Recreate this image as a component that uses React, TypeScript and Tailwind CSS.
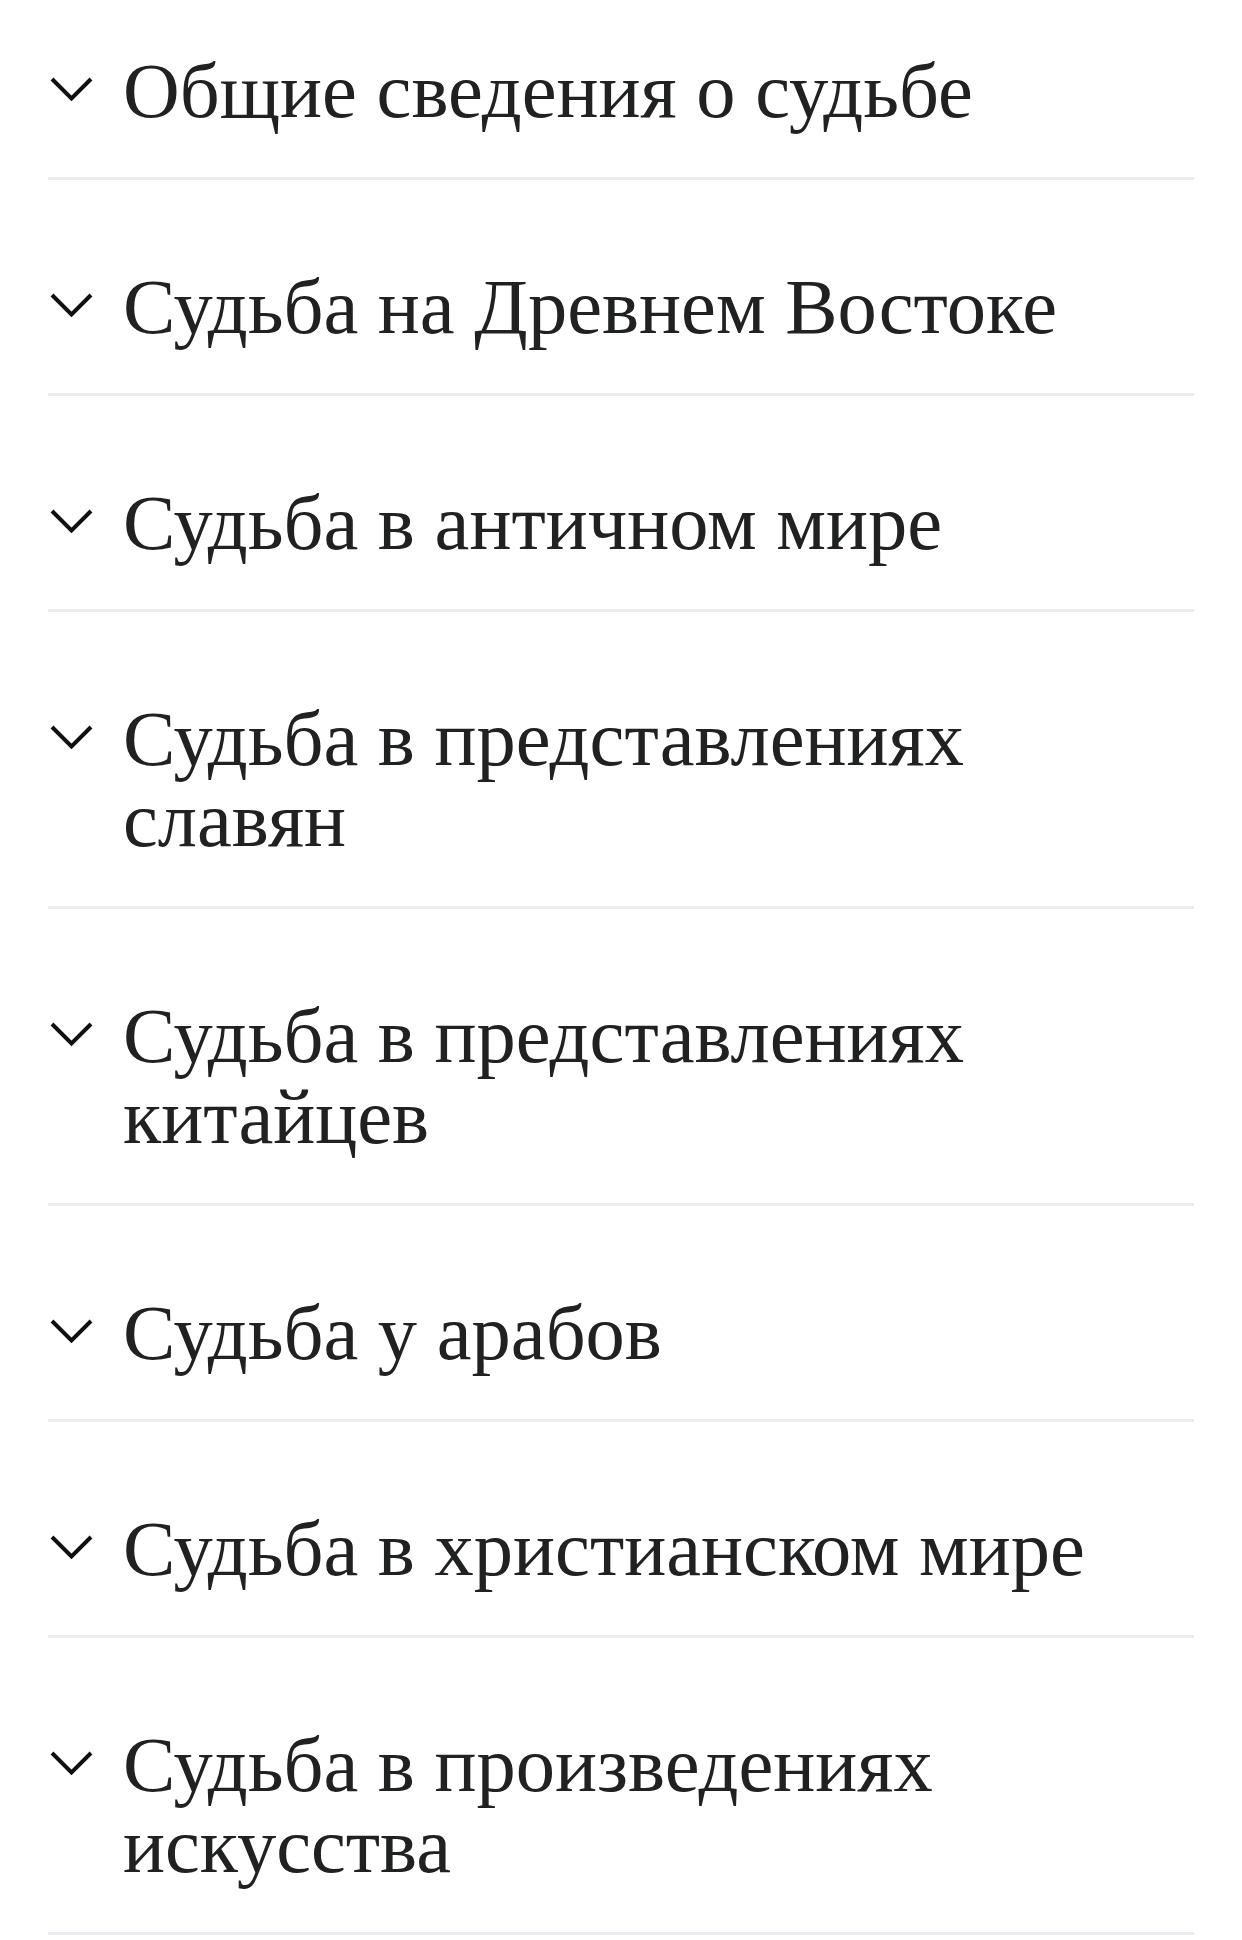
const sections = [
  "Общие сведения о судьбе",
  "Судьба на Древнем Востоке",
  "Судьба в античном мире",
  "Судьба в представлениях славян",
  "Судьба в представлениях китайцев",
  "Судьба у арабов",
  "Судьба в христианском мире",
  "Судьба в произведениях искусства",
];

function Chevron() {
  return (
    <svg width="47" height="28" viewBox="0 0 47 28" fill="none" className="block">
      <path d="M4 4 L23.5 23.5 L43 4" stroke="#101010" strokeWidth="4" />
    </svg>
  );
}

export default function App() {
  return (
    <div className="min-h-screen bg-white px-[48px]">
      {sections.map((title, i) => (
        <div
          key={title}
          className={`flex items-start border-b-[3px] border-[#eaecf0] pb-[46px] ${
            i === 0 ? "pt-[50px]" : "pt-[86px]"
          }`}
        >
          <div className="w-[75px] shrink-0 pt-[25px]">
            <Chevron />
          </div>
          <h2
            className="text-[78.5px] leading-[81px] text-[#202122]"
            style={{ fontFamily: '"Liberation Serif", "Times New Roman", serif' }}
          >
            {title}
          </h2>
        </div>
      ))}
    </div>
  );
}
